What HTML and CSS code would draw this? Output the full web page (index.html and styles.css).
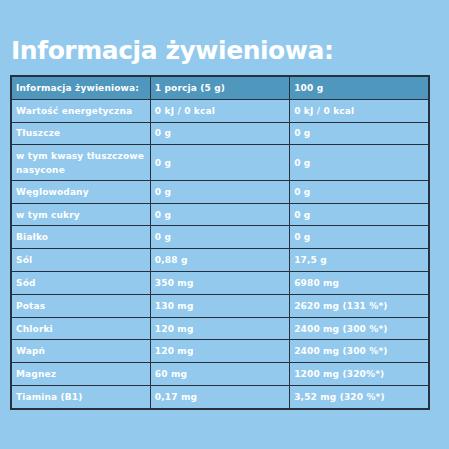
FILE: index.html
```html
<!DOCTYPE html>
<html lang="pl">
<head>
<meta charset="utf-8">
<link rel="stylesheet" href="styles.css">
</head>
<body>
<main class="page">
  <h1 class="title">Informacja żywieniowa:</h1>
  <table class="nutri">
    <thead>
      <tr><th>Informacja żywieniowa:</th><th>1 porcja (5 g)</th><th>100 g</th></tr>
    </thead>
    <tbody>
      <tr><td>Wartość energetyczna</td><td>0 kJ / 0 kcal</td><td>0 kJ / 0 kcal</td></tr>
      <tr><td>Tłuszcze</td><td>0 g</td><td>0 g</td></tr>
      <tr class="tall"><td>w tym kwasy tłuszczowe<br>nasycone</td><td>0 g</td><td>0 g</td></tr>
      <tr><td>Węglowodany</td><td>0 g</td><td>0 g</td></tr>
      <tr><td>w tym cukry</td><td>0 g</td><td>0 g</td></tr>
      <tr><td>Białko</td><td>0 g</td><td>0 g</td></tr>
      <tr><td>Sól</td><td>0,88 g</td><td>17,5 g</td></tr>
      <tr><td>Sód</td><td>350 mg</td><td>6980 mg</td></tr>
      <tr><td>Potas</td><td>130 mg</td><td>2620 mg (131 %*)</td></tr>
      <tr><td>Chlorki</td><td>120 mg</td><td>2400 mg (300 %*)</td></tr>
      <tr><td>Wapń</td><td>120 mg</td><td>2400 mg (300 %*)</td></tr>
      <tr><td>Magnez</td><td>60 mg</td><td>1200 mg (320%*)</td></tr>
      <tr><td>Tiamina (B1)</td><td>0,17 mg</td><td>3,52 mg (320 %*)</td></tr>
    </tbody>
  </table>
</main>
</body>
</html>
```
FILE: styles.css
```css
html, body {
  margin: 0;
  padding: 0;
  background: #93c9ec;
}
.page {
  width: 449px;
  height: 449px;
  box-sizing: border-box;
  padding: 36px 0 0 10px;
  font-family: "DejaVu Sans", "Liberation Sans", sans-serif;
  color: #ffffff;
}
.title {
  margin: 0 0 9px 1px;
  font-size: 25px;
  line-height: 30px;
  font-weight: 700;
  letter-spacing: -0.45px;
}
.nutri {
  width: 420px;
  border-collapse: collapse;
  table-layout: fixed;
  border: 2px solid #27313d;
}
.nutri th, .nutri td {
  border: 1.5px solid #27313d;
  height: 21.8px;
  padding: 0 3px 0 4px;
  font-size: 9px;
  font-weight: 700;
  text-align: left;
  vertical-align: middle;
  line-height: 14px;
  letter-spacing: 0.15px;
}
.nutri th {
  background: #5097bd;
}
.nutri .tall td {
  height: 34.5px;
}
```
